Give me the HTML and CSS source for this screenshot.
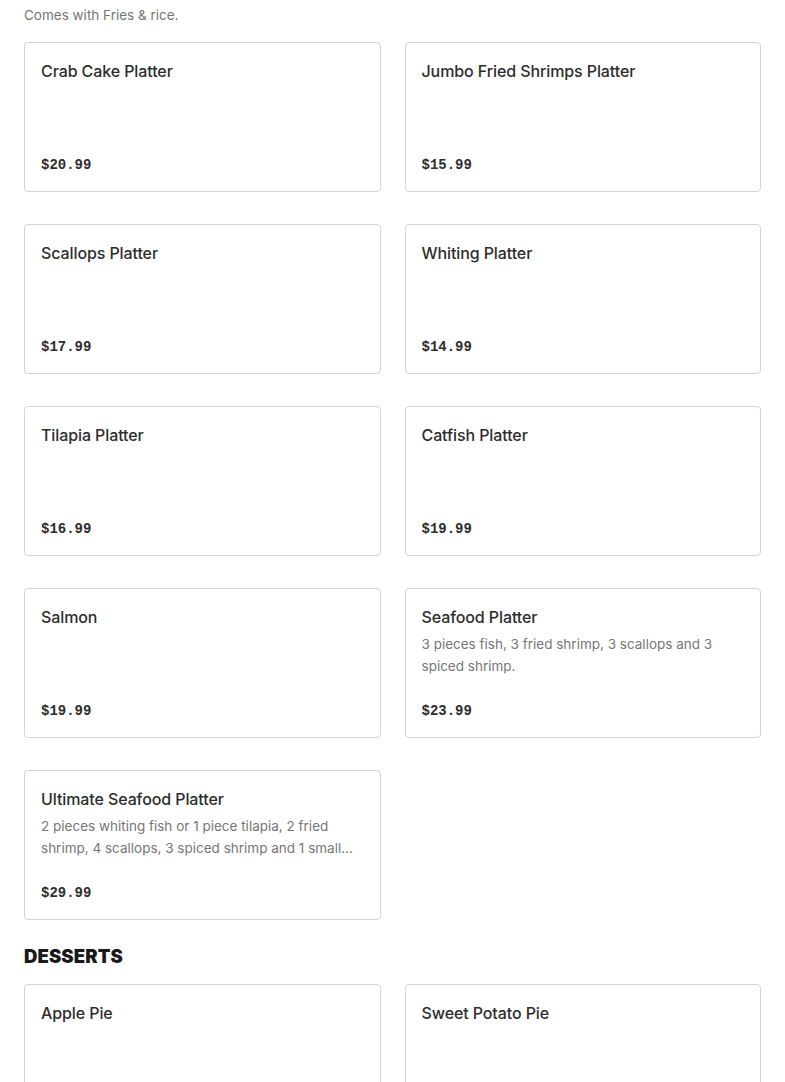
FILE: index.html
```html
<!DOCTYPE html>
<html>
<head>
<meta charset="utf-8">
<link rel="stylesheet" href="styles.css">
</head>
<body>
<div class="page">
  <p class="section-note">Comes with Fries &amp; rice.</p>
  <div class="grid">
    <div class="card"><div class="info"><h3 class="title">Crab Cake Platter</h3></div><div class="price">$20.99</div></div>
    <div class="card"><div class="info"><h3 class="title">Jumbo Fried Shrimps Platter</h3></div><div class="price">$15.99</div></div>
    <div class="card"><div class="info"><h3 class="title">Scallops Platter</h3></div><div class="price">$17.99</div></div>
    <div class="card"><div class="info"><h3 class="title">Whiting Platter</h3></div><div class="price">$14.99</div></div>
    <div class="card"><div class="info"><h3 class="title">Tilapia Platter</h3></div><div class="price">$16.99</div></div>
    <div class="card"><div class="info"><h3 class="title">Catfish Platter</h3></div><div class="price">$19.99</div></div>
    <div class="card"><div class="info"><h3 class="title">Salmon</h3></div><div class="price">$19.99</div></div>
    <div class="card"><div class="info"><h3 class="title">Seafood Platter</h3><p class="desc">3 pieces fish, 3 fried shrimp, 3 scallops and 3 spiced shrimp.</p></div><div class="price">$23.99</div></div>
    <div class="card"><div class="info"><h3 class="title">Ultimate Seafood Platter</h3><p class="desc">2 pieces whiting fish or 1 piece tilapia, 2 fried shrimp, 4 scallops, 3 spiced shrimp and 1 small side of fries and rice.</p></div><div class="price">$29.99</div></div>
  </div>
  <h2 class="section-title">DESSERTS</h2>
  <div class="grid">
    <div class="card"><div class="info"><h3 class="title">Apple Pie</h3></div><div class="price">$4.99</div></div>
    <div class="card"><div class="info"><h3 class="title">Sweet Potato Pie</h3></div><div class="price">$4.99</div></div>
  </div>
</div>
</body>
</html>
```

FILE: styles.css
```css
html, body {
  margin: 0;
  padding: 0;
  background: #ffffff;
}
body {
  font-family: Inter, "Liberation Sans", sans-serif;
  color: #2d2d2d;
}
.page {
  padding: 0 24px;
}
.section-note {
  margin: 0;
  padding-top: 4px;
  font-size: 13.5px;
  line-height: 22px;
  color: #767676;
  height: 38px;
}
.grid {
  display: grid;
  grid-template-columns: 1fr 1fr;
  column-gap: 24px;
  row-gap: 32px;
}
.card {
  box-sizing: border-box;
  height: 150px;
  border: 1px solid #d4d4d4;
  border-radius: 4px;
  padding: 16px;
  display: flex;
  flex-direction: column;
  justify-content: space-between;
  overflow: hidden;
}
.title {
  margin: 0;
  font-size: 16px;
  line-height: 24px;
  font-weight: 500;
  color: #2d2d2d;
  letter-spacing: -0.1px;
}
.desc {
  margin: 4px 0 0 0;
  font-size: 13.5px;
  line-height: 22px;
  color: #767676;
  display: -webkit-box;
  -webkit-line-clamp: 2;
  -webkit-box-orient: vertical;
  overflow: hidden;
}
.price {
  font-family: "Liberation Mono", "DejaVu Sans Mono", monospace;
  font-weight: 700;
  font-size: 14px;
  line-height: 20px;
  color: #2d2d2d;
}
.section-title {
  margin: 0;
  padding: 26px 0 17px;
  font-size: 18.5px;
  line-height: 21px;
  font-weight: 900;
  color: #191919;
  letter-spacing: 0.1px;
}
```
